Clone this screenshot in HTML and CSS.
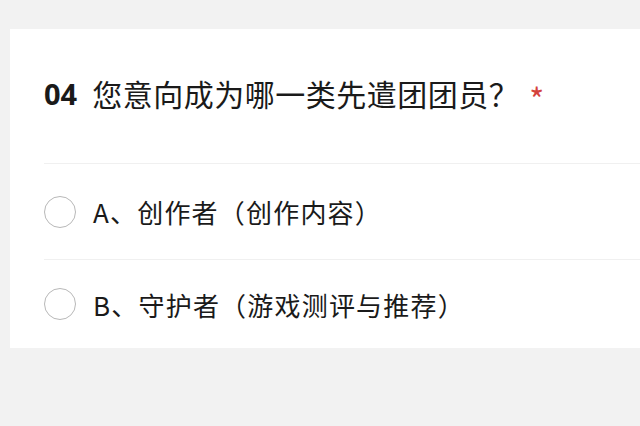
FILE: index.html
```html
<!DOCTYPE html>
<html lang="zh-CN">
<head>
  <meta charset="UTF-8" />
  <meta name="viewport" content="width=device-width, initial-scale=1.0" />
  <title>问卷</title>
  <link rel="stylesheet" href="styles.css">
</head>
<body>
  <div class="card">
    <div class="question">
      <span class="num">04</span>
      <span class="title">您意向成为哪一类先遣团团员？</span>
      <span class="required">*</span>
    </div>

    <label class="option">
      <span class="radio"></span>
      <span class="label">A、创作者（创作内容）</span>
    </label>
    <label class="option last">
      <span class="radio"></span>
      <span class="label">B、守护者（游戏测评与推荐）</span>
    </label>
  </div>
</body>
</html>
```

FILE: styles.css
```css
body {
  margin: 0;
  padding: 29px 0 0 10px;
  background-color: #f2f2f2;
  font-family: "Noto Sans CJK SC", "Noto Sans", sans-serif;
  color: #1a1a1a;
  height: 426px;
  box-sizing: border-box;
  overflow: hidden;
}
.card {
  background-color: #fff;
  padding-left: 34px;
}
.question {
  display: flex;
  align-items: center;
  height: 135px;
  box-sizing: border-box;
  padding-bottom: 6px;
  border-bottom: 1px solid #f0f0f0;
}
.num {
  font-family: "Noto Sans", sans-serif;
  font-weight: 700;
  font-size: 29px;
  margin-right: 15px;
}
.title {
  font-size: 30px;
  letter-spacing: 0.5px;
}
.required {
  color: #d4423c;
  font-size: 32px;
  margin-left: 10px;
  align-self: flex-start;
  margin-top: 46px;
}
.option {
  display: flex;
  align-items: center;
  height: 96px;
  box-sizing: border-box;
  border-bottom: 1px solid #f0f0f0;
}
.option.last {
  height: 88px;
  border-bottom: none;
}
.radio {
  width: 30px;
  height: 30px;
  border: 1.8px solid #b8b8b8;
  border-radius: 50%;
  margin-right: 17px;
}
.label {
  font-size: 26px;
  letter-spacing: 1.2px;
}
```
